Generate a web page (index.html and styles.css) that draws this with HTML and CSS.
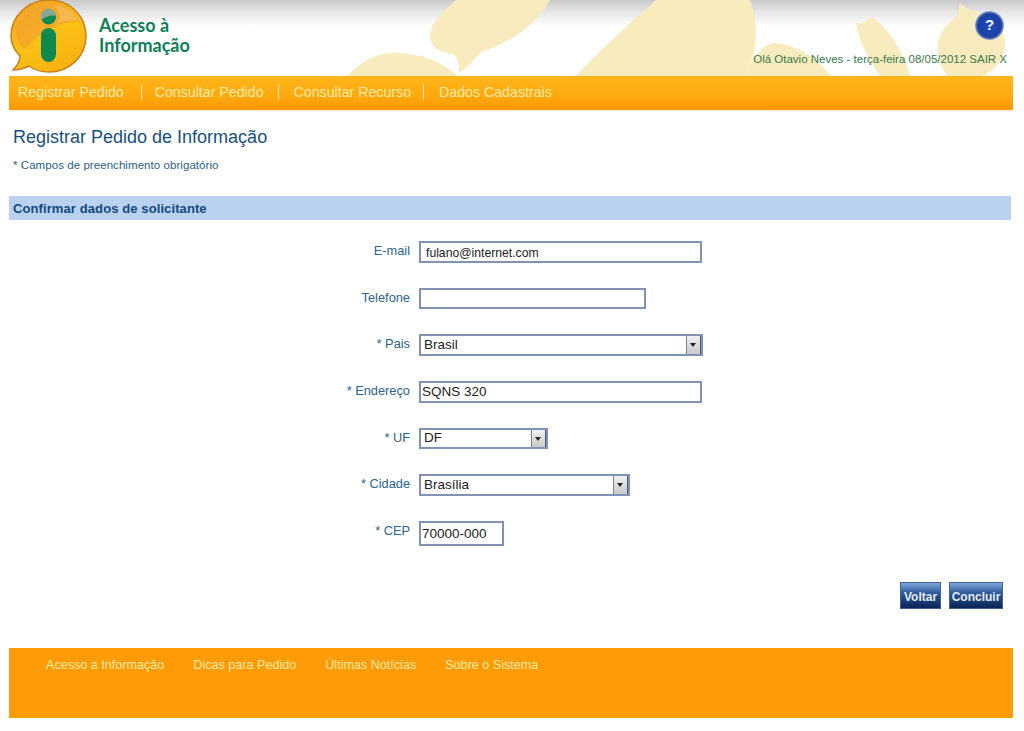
FILE: index.html
```html
<!DOCTYPE html>
<html lang="pt-BR">
<head>
<meta charset="utf-8">
<title>Registrar Pedido de Informação</title>
<link rel="stylesheet" href="styles.css">
</head>
<body>
<header class="top">
  <svg class="top-shapes" width="1024" height="76" viewBox="0 0 1024 76" aria-hidden="true">
    <g fill="#f8ebbd">
      <path d="M347 76C362 60 378 53 396 53C420 53 442 62 458 76Z"/>
      <path d="M456 0C442 12 430 24 430 36C431 50 442 52 452 54C458 56 459 66 459 73C466 70 474 58 482 52C510 42 536 26 550 0Z"/>
      <path d="M576 76C600 50 628 25 656 0H750C758 22 760 48 744 76Z"/>
      <path d="M744 76C752 58 762 44 775 43C798 45 818 60 831 76Z"/>
      <path d="M856 23C860 24 866 21 871 17C885 24 899 44 911 76H880C868 58 859 42 856 23Z"/>
      <path d="M960 3C966 9 974 11 982 13C1000 20 1006 34 1005 48C1002 62 992 72 982 76H947C940 66 937 56 938 44C940 28 950 24 958 14Z"/>
    </g>
  </svg>
  <a class="brand" href="#">
    <svg class="brand-mark" width="80" height="76" viewBox="0 0 80 76" aria-hidden="true">
      <defs>
        <linearGradient id="bubble" x1="0.15" y1="0" x2="0.75" y2="1">
          <stop offset="0" stop-color="#f2a024"/>
          <stop offset="0.5" stop-color="#fcc116"/>
          <stop offset="1" stop-color="#f8b010"/>
        </linearGradient>
      </defs>
      <path d="M41 0C62 0 78 16 78 36C78 57 61 72 41 72C32 72 25 69 21 66C15 69 10 70 5 70C9 66 12 61 12 56C6 50 3 43 3 36C3 16 20 0 41 0Z" fill="url(#bubble)" stroke="#c9811c" stroke-width="1.5"/>
      <path d="M9 22C16 8 30 3 44 3C58 4 68 12 72 22C56 20 32 30 17 50C9 42 6 32 9 22Z" fill="#f2a52c" opacity=".8"/>
      <path d="M46 5C58 6 67 13 71 21C64 20 56 21 50 23C52 16 51 10 46 5Z" fill="#f9cf85" opacity=".4"/>
      <circle cx="40.500" cy="17" r="7.500" fill="#0f8a4e"/>
      <path d="M33 17a7.500 7.500 0 0 1 15 -1.500C42 15 37 17 33 20Z" fill="#86a894"/>
      <rect x="33" y="28" width="15" height="34" rx="7.500" fill="#0f8a4e"/>
    </svg>
    <span class="brand-name"><span class="brand-line">Acesso à</span><span class="brand-line">Informação</span></span>
  </a>
  <div class="top-right">
    <a class="help" href="#">?</a>
    <p class="greeting">Olá Otavio Neves - terça-feira 08/05/2012 SAIR X</p>
  </div>
</header>

<nav class="main-nav">
  <a class="nav-registrar" href="#">Registrar Pedido</a>
  <a class="nav-pedido" href="#">Consultar Pedido</a>
  <a class="nav-recurso" href="#">Consultar Recurso</a>
  <a href="#">Dados Cadastrais</a>
</nav>

<main>
  <h1 class="page-title">Registrar Pedido de Informação</h1>
  <p class="required-note">* Campos de preenchimento obrigatório</p>
  <h2 class="section-bar">Confirmar dados de solicitante</h2>

  <form class="form">
    <div class="row">
      <label for="email">E-mail</label>
      <input class="field field-email" id="email" type="text" value="fulano@internet.com">
    </div>
    <div class="row">
      <label for="tel">Telefone</label>
      <input class="field field-tel" id="tel" type="text">
    </div>
    <div class="row">
      <label for="pais">* Pais</label>
      <span class="select select-pais">
        <select id="pais"><option>Brasil</option></select>
        <span class="select-arrow"></span>
      </span>
    </div>
    <div class="row">
      <label for="end">* Endereço</label>
      <input class="field field-large" id="end" type="text" value="SQNS 320">
    </div>
    <div class="row">
      <label for="uf">* UF</label>
      <span class="select select-uf">
        <select id="uf"><option>DF</option></select>
        <span class="select-arrow"></span>
      </span>
    </div>
    <div class="row">
      <label for="cidade">* Cidade</label>
      <span class="select select-cidade">
        <select id="cidade"><option>Brasília</option></select>
        <span class="select-arrow"></span>
      </span>
    </div>
    <div class="row">
      <label for="cep">* CEP</label>
      <input class="field field-cep" id="cep" type="text" value="70000-000">
    </div>
    <div class="actions">
      <button class="btn btn-back" type="button">Voltar</button>
      <button class="btn btn-done" type="button">Concluir</button>
    </div>
  </form>
</main>

<footer class="main-footer">
  <a href="#">Acesso a Informação</a>
  <a href="#">Dicas para Pedido</a>
  <a href="#">Últimas Notícias</a>
  <a href="#">Sobre o Sistema</a>
</footer>
</body>
</html>
```
FILE: styles.css
```css
* { box-sizing: border-box; }

html, body { margin: 0; padding: 0; background: #fff; }

body {
  font-family: "Liberation Sans", Arial, sans-serif;
  color: #1d5a8a;
  height: 731px;
  overflow: hidden;
}

a { text-decoration: none; color: inherit; }

.top {
  position: relative;
  height: 76px;
  display: flex;
  justify-content: space-between;
  background: linear-gradient(#c9c9c9 0, #e6e6e6 12px, #fdfdfd 25px, #fff 30px);
}

.top-shapes { position: absolute; left: 0; top: 0; }

.brand {
  position: relative;
  display: flex;
  align-items: flex-start;
  padding-left: 8px;
}

.brand-mark { display: block; }

.brand-name {
  margin: 16px 0 0 11px;
  font-family: Lato, sans-serif;
  font-size: 18px;
  line-height: 19.500px;
  font-weight: 700;
  color: #0d7f56;
}

.brand-line { display: block; height: 19.500px; }

.top-right {
  position: relative;
  display: flex;
  flex-direction: column;
  align-items: flex-end;
  padding: 11px 17px 0 0;
}

.help {
  width: 29px;
  height: 29px;
  margin-right: 3px;
  border-radius: 50%;
  text-align: center;
  font-size: 15px;
  line-height: 28px;
  font-weight: 700;
  color: #fff;
  background: radial-gradient(closest-side, #1f4cc0 0, #1a3fa8 70%, #28479c 84%, #9db2dc 100%);
}

.greeting {
  margin: 12px 0 0;
  font-size: 11.500px;
  line-height: 15px;
  white-space: nowrap;
  color: #3a7a48;
}

.main-nav {
  display: flex;
  align-items: center;
  height: 34px;
  margin: 0 11px 0 9px;
  padding-bottom: 2px;
  background: linear-gradient(#ffb61a, #ffa90f 60%, #fd9705);
  box-shadow: 0 1px 1px #eee;
}

.main-nav a {
  font-size: 14.200px;
  line-height: 15px;
  padding: 0 0 0 15px;
  color: #ffeaa6;
  border-left: 1px solid #ffeaa6;
}

.main-nav .nav-registrar { padding: 0 17px 0 9px; border-left: 0; }
.main-nav .nav-pedido { padding: 0 14px 0 13px; }
.main-nav .nav-recurso { padding: 0 12px 0 15px; }

.page-title {
  margin: 16px 0 0 13px;
  font-size: 18px;
  line-height: 22px;
  font-weight: 400;
  color: #17507f;
}

.required-note {
  margin: 10px 0 0 13px;
  font-size: 11.500px;
  line-height: 14px;
  letter-spacing: 0.060px;
  color: #2a6088;
}

.section-bar {
  height: 24px;
  margin: 24px 13px 0 9px;
  padding: 0 0 0 4px;
  font-size: 13px;
  line-height: 25px;
  font-weight: 700;
  letter-spacing: 0.100px;
  color: #134a7d;
  background: #b9d2f0;
}

.form { padding-top: 21px; }

.row {
  display: flex;
  align-items: flex-start;
  height: 46.670px;
  padding-left: 300px;
}

.row label {
  flex: 0 0 110px;
  padding-top: 2px;
  margin-right: 9px;
  text-align: right;
  font-size: 12.800px;
  line-height: 15px;
  color: #2d648f;
}

.field {
  display: block;
  height: 22px;
  margin: 0;
  padding: 0 0 0 1px;
  border: 2px solid #8292b2;
  border-radius: 0;
  outline: 0;
  background: #fff;
  font-family: "Liberation Sans", Arial, sans-serif;
  font-size: 13.500px;
  color: #222;
}

.field-email { width: 283px; padding: 2px 0 0 5px; font-size: 12.200px; }
.field-tel { width: 227px; height: 21px; }
.field-large { width: 283px; }
.field-cep { width: 85px; height: 25px; }

.select {
  position: relative;
  display: block;
  height: 22px;
  border: 2px solid #8292b2;
}

.select select {
  display: block;
  width: 100%;
  height: 100%;
  margin: 0;
  padding: 0 0 2px 3px;
  border: 0;
  border-radius: 0;
  outline: 0;
  appearance: none;
  background: #fff;
  font-family: "Liberation Sans", Arial, sans-serif;
  font-size: 13.500px;
  color: #222;
}

.select-pais { width: 284px; }
.select-uf { width: 129px; height: 21px; }
.select-cidade { width: 211px; }

.select-arrow {
  position: absolute;
  top: 0;
  right: 0;
  bottom: 0;
  width: 15px;
  border-left: 1px solid #75839b;
  border-right: 1px solid #4a5a78;
  background: linear-gradient(#f2f2f2, #c8c8c8);
  pointer-events: none;
}

.select-arrow::after {
  content: "";
  position: absolute;
  left: 3px;
  top: 7px;
  border: 3.500px solid transparent;
  border-bottom: 0;
  border-top: 4px solid #222;
}

.actions {
  display: flex;
  justify-content: flex-end;
  gap: 8px;
  margin-top: 14px;
  padding-right: 21px;
}

.btn {
  height: 27px;
  margin: 0;
  padding: 3px 0 0;
  border: 1px solid #3f628f;
  border-radius: 0;
  font-family: "Liberation Sans", Arial, sans-serif;
  font-size: 12px;
  font-weight: 700;
  color: #e4edfa;
  background: linear-gradient(#7ea6dc, #2f5a9a 40%, #0b2358 100%);
}

.btn-back { width: 41px; }
.btn-done { width: 54px; }

.main-footer {
  display: flex;
  gap: 29px;
  height: 70px;
  margin: 39px 11px 0 9px;
  padding: 10px 0 0 37px;
  background: #fe9b05;
  font-size: 12.600px;
  line-height: 15px;
  color: #ffeaa6;
}
```
